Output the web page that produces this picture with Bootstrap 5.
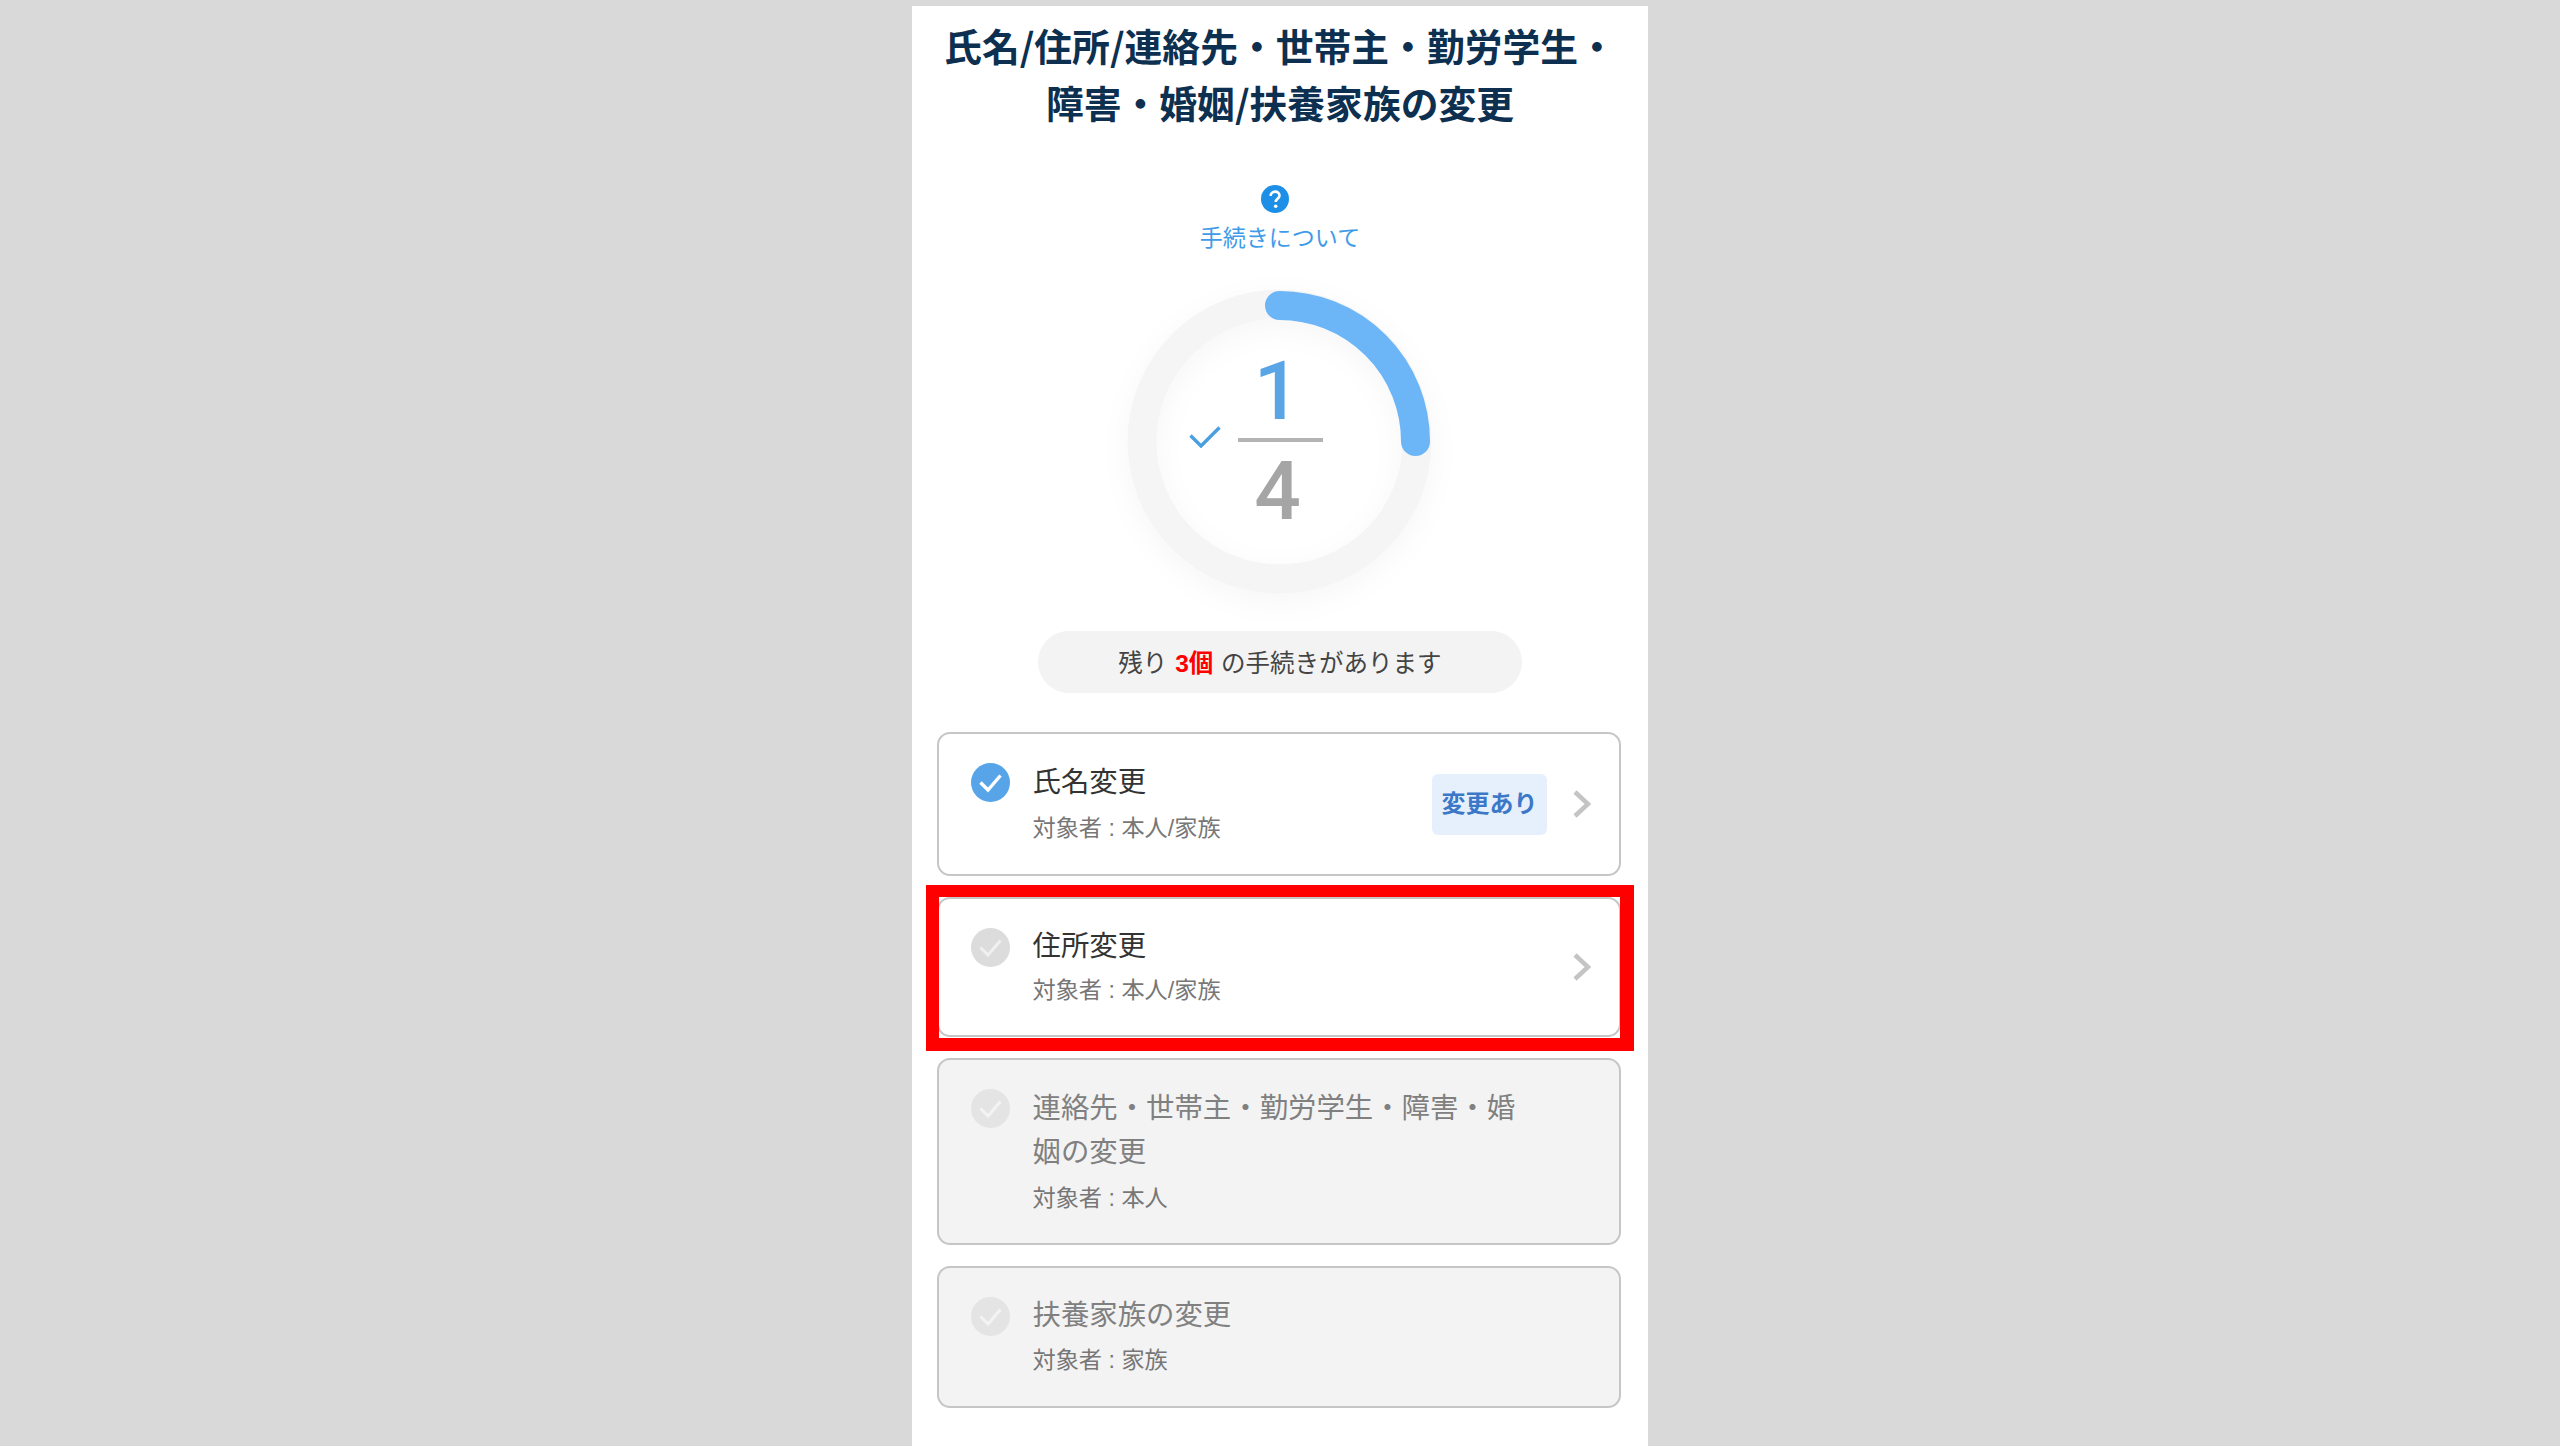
<!DOCTYPE html>
<html lang="ja">
<head>
<meta charset="utf-8">
<title>手続き</title>
<link rel="stylesheet" href="https://cdn.jsdelivr.net/npm/bootstrap@5.3.0/dist/css/bootstrap.min.css">
<style>
html,body{height:100%;}
body{background:#d9d9d9;font-family:"Liberation Sans","Noto Sans CJK JP",sans-serif;overflow:hidden;}
.screen-panel{width:736px;height:1440px;margin:6px auto 0;background:#fff;padding-top:10px;}
.page-title{font-family:"Noto Sans CJK JP",sans-serif;font-size:37.8px;line-height:57px;font-weight:700;color:#0e3050;text-align:center;margin:0;white-space:nowrap;}
.help-link{margin-top:55px;color:#3f9be8;font-size:23px;line-height:30px;text-decoration:none;}
.help-icon{width:28px;height:28px;margin-right:10px;margin-bottom:10px;display:block;}
.ring-wrap{width:304px;height:304px;margin-top:37px;}
.ring-svg{display:block;overflow:visible;filter:drop-shadow(0 8px 14px rgba(0,0,0,.035));}
.ring-center{padding-bottom:4px;}
.frac{width:85px;font-family:Roboto,"Liberation Sans",sans-serif;font-size:82px;font-weight:500;line-height:94px;text-align:center;}
.frac-top{color:#5aa5e6;padding-right:6px;}
.frac-bottom{color:#a5a5a5;border-top:4px solid #b4b4b4;padding-right:5px;padding-top:2px;margin-bottom:-2px;}
.frac-check{right:100%;top:50%;margin-right:17px;margin-top:-14px;width:32px;height:22px;}
.remain-pill{width:484px;height:62px;margin:37px auto 0;padding-top:4px;background:#f3f3f3;font-size:24.5px;color:#444;}
.remain-num{color:#f00;font-weight:700;margin:0 1px;}
.step-list{margin:39px 27px 0 25px;gap:21px;}
.step-card{border:2px solid #c6c6c6;border-radius:13px;}
.step-done,.step-open{background:#fff;}
.step-off{background:#f3f3f3;}
.step-h1{height:144px;}.step-h2{height:140px;}.step-h3{height:187px;}.step-h4{height:142px;}
.step-row{padding:0 28px 0 31.500px;}
.step-icon{width:39px;height:39px;flex:none;margin-top:29px;margin-right:23px;}
.step-text{padding-top:25px;}
.step-h1 .step-text,.step-h3 .step-text{padding-top:26px;}
.step-title{font-size:28.4px;line-height:44px;color:#333;max-width:500px;}
.step-off .step-title{color:#808080;}
.step-sub{font-size:23.2px;line-height:44px;color:#777;white-space:nowrap;}
.step-h1 .step-sub,.step-h3 .step-sub{margin-top:2px;}
.step-h4 .step-sub{margin-top:1px;}
.change-tag{width:115px;height:61px;margin-right:26px;background:#e6f0fc;color:#3b78c8;font-size:24px;font-weight:700;border-radius:6px;}
.step-chev{width:18px;height:28px;flex:none;}
.red-frame{inset:-14px -15px -16px -13.500px;border-style:solid;border-color:#f00;border-width:12px 14px 13px 13.500px;pointer-events:none;}
</style>
</head>
<body>
<main class="screen-panel">
  <h1 class="page-title">氏名/住所/連絡先・世帯主・勤労学生・<br>障害・婚姻/扶養家族の変更</h1>

  <a class="help-link d-flex flex-column align-items-center" href="#">
    <svg class="help-icon" viewBox="0 0 28 28" aria-hidden="true"><circle cx="14" cy="14" r="14" fill="#1e8fe6"/><path d="M9.600 11c0-2.600 2-4.400 4.500-4.400s4.400 1.600 4.400 3.900c0 3.200-3.800 3.400-3.800 6.400" fill="none" stroke="#fff" stroke-width="2.600"/><circle cx="14.700" cy="21.300" r="1.800" fill="#fff"/></svg>
    <span>手続きについて</span>
  </a>

  <div class="ring-wrap position-relative mx-auto">
    <svg class="ring-svg" width="304" height="304" viewBox="0 0 304 304" aria-hidden="true">
      <circle cx="151.500" cy="151.500" r="137.500" fill="none" stroke="#f5f5f5" stroke-width="29"/>
      <path d="M151.500 15.500A136 136 0 0 1 287.500 151.500" fill="none" stroke="#6cb5f7" stroke-width="29" stroke-linecap="round"/>
    </svg>
    <div class="ring-center position-absolute top-0 start-0 w-100 h-100 d-flex align-items-center justify-content-center">
      <div class="frac position-relative">
        <svg class="frac-check position-absolute" viewBox="0 0 32 22" aria-hidden="true"><path d="M1.500 9.500L12 20L30.500 1.500" fill="none" stroke="#4a9fe0" stroke-width="3.400"/></svg>
        <div class="frac-top">1</div>
        <div class="frac-bottom">4</div>
      </div>
    </div>
  </div>

  <div class="remain-pill rounded-pill d-flex align-items-center justify-content-center">
    <span>残り <span class="remain-num">3個</span> の手続きがあります</span>
  </div>

  <div class="step-list d-flex flex-column">
    <a class="card step-card step-done step-h1 text-decoration-none">
      <div class="step-row d-flex align-items-center h-100">
        <svg class="step-icon align-self-start" viewBox="0 0 39 39" aria-hidden="true"><circle cx="19.500" cy="19.500" r="19.500" fill="#57a5e8"/><path d="M9.500 19.500L17 27L29.500 12.500" fill="none" stroke="#fff" stroke-width="3.400"/></svg>
        <div class="step-text align-self-start">
          <div class="step-title">氏名変更</div>
          <div class="step-sub">対象者 : 本人/家族</div>
        </div>
        <span class="change-tag ms-auto d-flex align-items-center justify-content-center">変更あり</span>
        <svg class="step-chev" viewBox="0 0 18 28" aria-hidden="true"><path d="M2 2L15 14L2 26" fill="none" stroke="#c4c4c4" stroke-width="4.500"/></svg>
      </div>
    </a>

    <a class="card step-card step-open step-h2 text-decoration-none position-relative">
      <div class="step-row d-flex align-items-center h-100">
        <svg class="step-icon align-self-start" viewBox="0 0 39 39" aria-hidden="true"><circle cx="19.500" cy="19.500" r="19.500" fill="#dcdcdc"/><path d="M9.500 19.500L17 27L29.500 12.500" fill="none" stroke="#f0f0f0" stroke-width="3"/></svg>
        <div class="step-text align-self-start">
          <div class="step-title">住所変更</div>
          <div class="step-sub">対象者 : 本人/家族</div>
        </div>
        <svg class="step-chev ms-auto" viewBox="0 0 18 28" aria-hidden="true"><path d="M2 2L15 14L2 26" fill="none" stroke="#c4c4c4" stroke-width="4.500"/></svg>
      </div>
      <div class="red-frame position-absolute"></div>
    </a>

    <a class="card step-card step-off step-h3 text-decoration-none">
      <div class="step-row d-flex align-items-center h-100">
        <svg class="step-icon align-self-start" viewBox="0 0 39 39" aria-hidden="true"><circle cx="19.500" cy="19.500" r="19.500" fill="#e4e4e4"/><path d="M9.500 19.500L17 27L29.500 12.500" fill="none" stroke="#f3f3f3" stroke-width="3"/></svg>
        <div class="step-text align-self-start">
          <div class="step-title">連絡先・世帯主・勤労学生・障害・婚姻の変更</div>
          <div class="step-sub">対象者 : 本人</div>
        </div>
      </div>
    </a>

    <a class="card step-card step-off step-h4 text-decoration-none">
      <div class="step-row d-flex align-items-center h-100">
        <svg class="step-icon align-self-start" viewBox="0 0 39 39" aria-hidden="true"><circle cx="19.500" cy="19.500" r="19.500" fill="#e4e4e4"/><path d="M9.500 19.500L17 27L29.500 12.500" fill="none" stroke="#f3f3f3" stroke-width="3"/></svg>
        <div class="step-text align-self-start">
          <div class="step-title">扶養家族の変更</div>
          <div class="step-sub">対象者 : 家族</div>
        </div>
      </div>
    </a>
  </div>
</main>
<script src="https://cdn.jsdelivr.net/npm/bootstrap@5.3.0/dist/js/bootstrap.bundle.min.js"></script>
</body>
</html>
